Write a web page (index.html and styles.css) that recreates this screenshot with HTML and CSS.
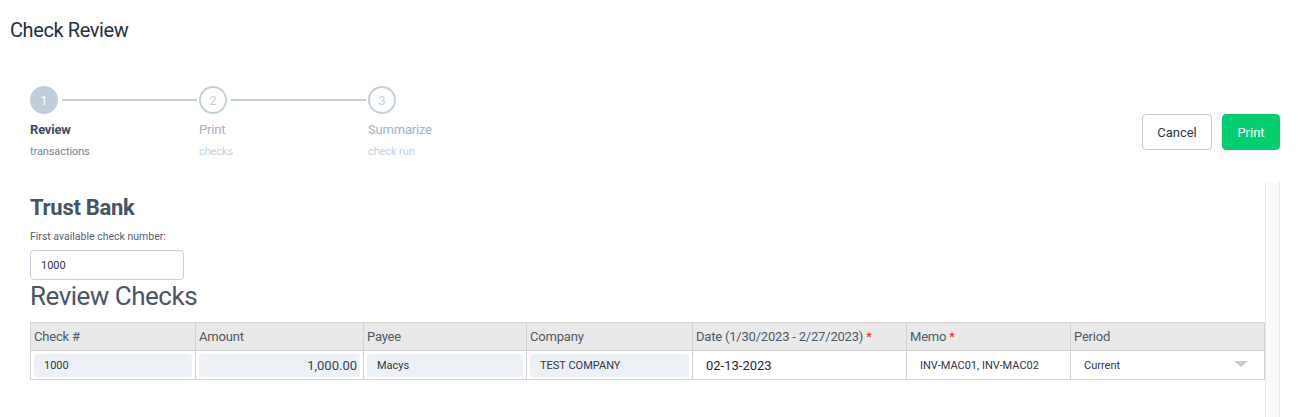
FILE: index.html
```html
<!DOCTYPE html>
<html>
<head>
<meta charset="utf-8">
<link rel="stylesheet" href="styles.css">
</head>
<body>
<div class="page">
  <h1 class="title">Check Review</h1>
  <div class="topbar">
    <div class="stepper">
      <div class="step active">
        <div class="step-head"><span class="circle">1</span><span class="line"></span></div>
        <div class="step-label">Review</div>
        <div class="step-sub">transactions</div>
      </div>
      <div class="step">
        <div class="step-head"><span class="circle">2</span><span class="line"></span></div>
        <div class="step-label">Print</div>
        <div class="step-sub">checks</div>
      </div>
      <div class="step last">
        <div class="step-head"><span class="circle">3</span></div>
        <div class="step-label">Summarize</div>
        <div class="step-sub">check run</div>
      </div>
    </div>
    <div class="actions">
      <button class="btn btn-cancel">Cancel</button>
      <button class="btn btn-print">Print</button>
    </div>
  </div>
  <div class="panel">
    <div class="content">
      <h2 class="bank">Trust Bank</h2>
      <div class="field-label">First available check number:</div>
      <div class="text-input">1000</div>
      <h3 class="section">Review Checks</h3>
      <table class="grid">
        <colgroup>
          <col style="width:165px"><col style="width:168px"><col style="width:163px"><col style="width:166px"><col style="width:214px"><col style="width:164px"><col>
        </colgroup>
        <thead>
          <tr>
            <th>Check #</th>
            <th>Amount</th>
            <th>Payee</th>
            <th>Company</th>
            <th>Date (1/30/2023 - 2/27/2023) <span class="req">*</span></th>
            <th>Memo <span class="req">*</span></th>
            <th>Period</th>
          </tr>
        </thead>
        <tbody>
          <tr>
            <td><div class="ro">1000</div></td>
            <td><div class="ro num">1,000.00</div></td>
            <td><div class="ro">Macys</div></td>
            <td><div class="ro">TEST COMPANY</div></td>
            <td><div class="edit date">02-13-2023</div></td>
            <td><div class="edit">INV-MAC01, INV-MAC02</div></td>
            <td><div class="edit select">Current<svg class="caret" width="14" height="8" viewBox="0 0 14 8"><path d="M0 0 L14 0 L7 6 Z" fill="#c3ccd6"/></svg></div></td>
          </tr>
        </tbody>
      </table>
    </div>
    <div class="scrolltrack"></div>
  </div>
</div>
</body>
</html>
```
FILE: styles.css
```css
* { box-sizing: border-box; }
html, body { margin: 0; padding: 0; background: #fff; }
body { font-family: Roboto, "Liberation Sans", sans-serif; color: #2d3748; }
.page { padding: 0 27px 0 10px; }
.title { margin: 0; padding-top: 18px; font-size: 20px; font-weight: 400; color: #253041; line-height: 24px; letter-spacing: -0.4px; }
.topbar { display: flex; justify-content: space-between; margin-top: 44px; padding-left: 20px; }
.stepper { display: flex; }
.step { width: 169px; }
.step.last { width: 80px; }
.step-head { display: flex; align-items: center; height: 28px; }
.circle { width: 28px; height: 28px; border-radius: 50%; border: 2px solid #c4d0dc; color: #c4d0dc; display: flex; align-items: center; justify-content: center; font-size: 13px; flex: none; background: #fff; }
.step.active .circle { background: #c0cedc; border-color: #c0cedc; color: #fff; }
.line { flex: 1; height: 2px; background: #c4d0dc; margin: 0 2px 0 4px; }
.step-label { margin-top: 8px; font-size: 13px; color: #a3b1c2; line-height: 16px; letter-spacing: -0.2px; }
.step.active .step-label { color: #3f4b5c; font-weight: 700; }
.step-sub { margin-top: 7px; font-size: 11px; color: #c6d0dc; line-height: 14px; letter-spacing: -0.1px; }
.step.active .step-sub { color: #7b8594; }
.actions { display: flex; gap: 10px; margin-top: 28px; align-self: flex-start; }
.btn { height: 36px; border-radius: 4px; font-family: Roboto, sans-serif; font-size: 13px; padding: 0; cursor: pointer; }
.btn-cancel { width: 70px; background: #fff; border: 1px solid #c8c8c8; color: #2b3544; }
.btn-print { width: 58px; background: #04cf6e; border: 1px solid #04cf6e; color: #fff; }
.panel { display: flex; margin-top: 23px; }
.content { flex: 1; padding: 13px 0 20px 20px; }
.scrolltrack { width: 15px; background: #fafafa; border-left: 1px solid #e6e6e6; border-right: 1px solid #e6e6e6; height: 236px; }
.bank { margin: 0; font-size: 22px; font-weight: 700; color: #465466; line-height: 26px; letter-spacing: -0.3px; }
.field-label { margin-top: 9px; font-size: 10.5px; color: #555f6d; line-height: 14px; }
.text-input { margin-top: 6px; width: 154px; height: 30px; border: 1px solid #c5d0dc; border-radius: 4px; font-size: 11px; color: #2d3748; padding: 0 10px; display: flex; align-items: center; }
.section { margin: 0; font-size: 26px; font-weight: 400; color: #4a5568; line-height: 32px; letter-spacing: -0.5px; }
.grid { margin-top: 10px; width: 1235px; border-collapse: collapse; table-layout: fixed; font-size: 13px; }
.grid th { background: #e9e9e9; border: 1px solid #d3d3d3; height: 28px; text-align: left; font-weight: 400; color: #4f5a68; padding: 0 3px; white-space: nowrap; overflow: hidden; letter-spacing: -0.2px; }
.grid td { border: 1px solid #d3d3d3; height: 29px; padding: 2px 3px; }
.req { color: #e8272f; }
.ro { background: #edf0f4; border-radius: 4px; height: 23px; display: flex; align-items: center; padding: 0 10px; font-size: 11px; color: #2d3748; }
.ro.num { justify-content: flex-end; padding: 0 3px; font-size: 13px; color: #3a4555; }
.edit { height: 23px; display: flex; align-items: center; padding: 0 10px; font-size: 11px; color: #2d3748; }
.edit.date { font-size: 13px; color: #1f2733; }
.edit.select { justify-content: space-between; padding-right: 13px; }
.caret { display: block; }
```
